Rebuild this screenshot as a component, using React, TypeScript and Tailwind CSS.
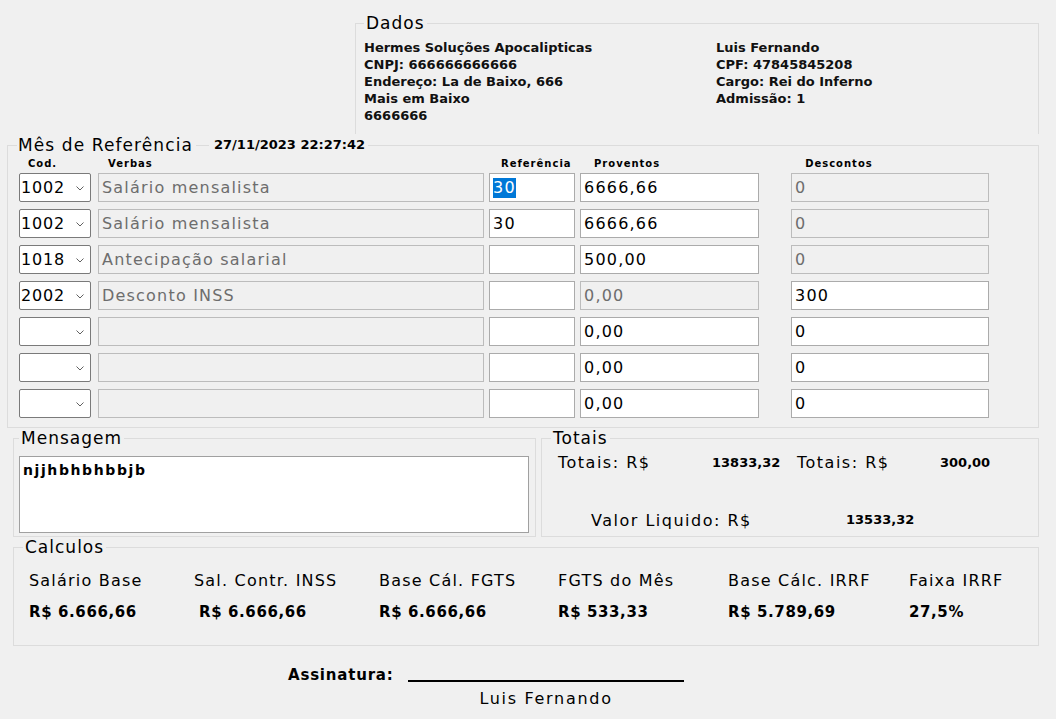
import { ReactNode } from 'react'

type Line = {
  cod: string
  verba: string
  refValue: string
  refSelected?: boolean
  prov: string
  provDisabled?: boolean
  desc: string
  descDisabled?: boolean
}

const lines: Line[] = [
  { cod: '1002', verba: 'Salário mensalista', refValue: '30', refSelected: true, prov: '6666,66', desc: '0', descDisabled: true },
  { cod: '1002', verba: 'Salário mensalista', refValue: '30', prov: '6666,66', desc: '0', descDisabled: true },
  { cod: '1018', verba: 'Antecipação salarial', refValue: '', prov: '500,00', desc: '0', descDisabled: true },
  { cod: '2002', verba: 'Desconto INSS', refValue: '', prov: '0,00', provDisabled: true, desc: '300' },
  { cod: '', verba: '', refValue: '', prov: '0,00', desc: '0' },
  { cod: '', verba: '', refValue: '', prov: '0,00', desc: '0' },
  { cod: '', verba: '', refValue: '', prov: '0,00', desc: '0' },
]

const calculos = [
  { label: 'Salário Base', value: 'R$ 6.666,66' },
  { label: 'Sal. Contr. INSS', value: 'R$ 6.666,66', shift: true },
  { label: 'Base Cál. FGTS', value: 'R$ 6.666,66' },
  { label: 'FGTS do Mês', value: 'R$ 533,33' },
  { label: 'Base Cálc. IRRF', value: 'R$ 5.789,69' },
  { label: 'Faixa IRRF', value: '27,5%' },
]

const Box = ({ value, disabled, width, selected }: { value: string; disabled?: boolean; width: string; selected?: boolean }) => (
  <div
    className={[
      'flex h-[29px] items-center border pl-[3px] text-[16px] tracking-[1.2px]',
      width,
      disabled ? 'border-[#bcbcbc] bg-[#f0f0f0] text-[#6d6d6d]' : 'border-[#ababab] bg-white text-black',
    ].join(' ')}
  >
    {selected ? <span className="bg-[#0078d7] leading-[20px] text-white">{value}</span> : value}
  </div>
)

const Combo = ({ value }: { value: string }) => (
  <div className="flex h-[29px] w-[72px] items-center justify-between rounded-[2px] border border-[#7a7a7a] bg-white pl-[1px] pr-[6px] text-[16px] tracking-[0.8px]">
    <span>{value}</span>
    <svg width="8" height="5" viewBox="0 0 8 5" className="mt-[1px]">
      <path d="M0.5 0.5 L4 4 L7.5 0.5" fill="none" stroke="#606060" strokeWidth="1" />
    </svg>
  </div>
)

const Group = ({ title, className, children }: { title: ReactNode; className: string; children: ReactNode }) => (
  <fieldset className={['border border-[#dcdcdc]', className].join(' ')}>
    <legend className="px-[2px] text-[17px] leading-[20px] tracking-[1px]">{title}</legend>
    {children}
  </fieldset>
)

export default function App() {
  return (
    <div className="h-[719px] w-[1056px] overflow-hidden bg-[#f0f0f0] font-['DejaVu_Sans',sans-serif] text-black">
      {/* Dados */}
      <Group title="Dados" className="ml-[355px] mt-[13px] h-[121px] w-[684px] border-b-0 pl-[8px]">
        <div className="mt-[6px] flex text-[13px] font-bold leading-[17px] text-[#111]">
          <div className="w-[352px]">
            <div>Hermes Soluções Apocalipticas</div>
            <div>CNPJ: 666666666666</div>
            <div>Endereço: La de Baixo, 666</div>
            <div>Mais em Baixo</div>
            <div>6666666</div>
          </div>
          <div>
            <div>Luis Fernando</div>
            <div>CPF: 47845845208</div>
            <div>Cargo: Rei do Inferno</div>
            <div>Admissão: 1</div>
          </div>
        </div>
      </Group>

      {/* Mês de Referência */}
      <fieldset className="ml-[7px] h-[294px] w-[1032px] border border-[#dcdcdc] pl-[11px]">
        <legend className="-ml-[2px] flex items-center">
          <span className="px-[1px] text-[17px] leading-[22px] tracking-[1.1px]">Mês de Referência</span>
          <span className="mx-[2px] h-px w-[13px] bg-[#dcdcdc]" />
          <span className="px-[3px] text-[13px] font-bold leading-[22px]">27/11/2023 22:27:42</span>
        </legend>
        <div className="flex h-[16px] items-center text-[10px] font-bold leading-[12px] tracking-[1px]">
          <span className="w-[79px] pl-[9px]">Cod.</span>
          <span className="w-[403px] pl-[10px]">Verbas</span>
          <span className="w-[93px]">Referência</span>
          <span>Proventos</span>
          <span className="pl-[145px]">Descontos</span>
        </div>
        <div className="mt-[1px] flex flex-col gap-[7px]">
          {lines.map((l, i) => (
            <div key={i} className="flex items-center">
              <Combo value={l.cod} />
              <div className="ml-[7px]">
                <Box value={l.verba} disabled width="w-[386px]" />
              </div>
              <div className="ml-[5px]">
                <Box value={l.refValue} width="w-[86px]" selected={l.refSelected} />
              </div>
              <div className="ml-[5px]">
                <Box value={l.prov} disabled={l.provDisabled} width="w-[179px]" />
              </div>
              <div className="ml-[32px]">
                <Box value={l.desc} disabled={l.descDisabled} width="w-[198px]" />
              </div>
            </div>
          ))}
        </div>
      </fieldset>

      {/* Mensagem + Totais */}
      <div className="flex">
        <Group title="Mensagem" className="ml-[13px] h-[109px] w-[523px] pl-[5px]">
          <div className="mt-[8px] h-[77px] w-[510px] border border-[#a0a0a0] bg-white px-[3px] pt-[4px] text-[14px] font-bold leading-[18px] tracking-[1.6px]">
            njjhbhbhbbjb
          </div>
        </Group>
        <Group title="Totais" className="ml-[5px] h-[109px] w-[498px] pl-[9px]">
          <div className="mt-[5px] flex items-center leading-[20px]">
            <span className="w-[161px] pl-[7px] text-[16px] tracking-[1.5px]">Totais: R$</span>
            <span className="w-[85px] text-[13px] font-bold">13833,32</span>
            <span className="w-[143px] text-[16px] tracking-[1.5px]">Totais: R$</span>
            <span className="text-[13px] font-bold">300,00</span>
          </div>
          <div className="mt-[38px] flex items-center leading-[20px]">
            <span className="w-[295px] pl-[40px] text-[16px] tracking-[1.5px]">Valor Liquido: R$</span>
            <span className="-mt-[3px] text-[13px] font-bold">13533,32</span>
          </div>
        </Group>
      </div>

      {/* Calculos */}
      <Group title="Calculos" className="ml-[13px] h-[109px] w-[1026px] pl-[9px]">
        <div className="mt-[14px] grid grid-cols-[165px_185px_179px_170px_181px_1fr] gap-y-[11px] pl-[6px] text-[16px] leading-[20px] tracking-[1.2px]">
          {calculos.map((c) => (
            <span key={c.label}>{c.label}</span>
          ))}
          {calculos.map((c) => (
            <span key={c.label + 'v'} className={c.shift ? 'pl-[5px] text-[15px] font-bold tracking-[0.6px]' : 'text-[15px] font-bold tracking-[0.6px]'}>
              {c.value}
            </span>
          ))}
        </div>
      </Group>

      {/* Assinatura */}
      <div className="mt-[19px] flex items-end">
        <span className="ml-[288px] w-[120px] text-[15px] font-bold leading-[20px] tracking-[0.8px]">Assinatura:</span>
        <span className="mb-[3px] h-[2px] w-[276px] bg-black" />
      </div>
      <div className="ml-[408px] mt-[4px] w-[276px] text-center text-[16px] leading-[20px] tracking-[1.7px]">Luis Fernando</div>
    </div>
  )
}
